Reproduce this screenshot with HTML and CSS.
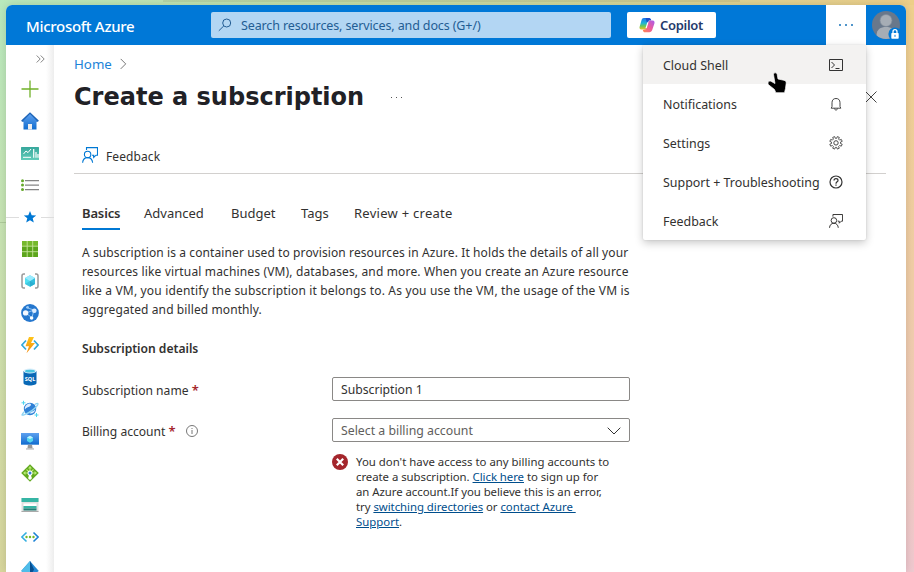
FILE: index.html
```html
<!DOCTYPE html>
<html lang="en">
<head>
<meta charset="utf-8">
<title>Create a subscription - Microsoft Azure</title>
<link rel="stylesheet" href="styles.css">
</head>
<body>
<svg class="defs" aria-hidden="true">
  <defs>
    <linearGradient id="blue" x1="0" y1="0" x2="0" y2="1"><stop offset="0" stop-color="#5ea0ef"/><stop offset="1" stop-color="#0f6ccf"/></linearGradient>
    <linearGradient id="teal" x1="0" y1="0" x2="0" y2="1"><stop offset="0" stop-color="#37a79c"/><stop offset="1" stop-color="#62ccb9"/></linearGradient>
    <linearGradient id="bolt" x1="0" y1="0" x2="0" y2="1"><stop offset="0" stop-color="#fec51b"/><stop offset="1" stop-color="#f58b0b"/></linearGradient>
    <linearGradient id="cp1" x1="0" y1="0" x2="0" y2="1"><stop offset="0" stop-color="#1976ee"/><stop offset=".45" stop-color="#20b4d5"/><stop offset=".7" stop-color="#6bc956"/><stop offset="1" stop-color="#f5bf25"/></linearGradient>
    <linearGradient id="cp2" x1="1" y1="0" x2="0" y2="1"><stop offset="0" stop-color="#a65cf0"/><stop offset=".5" stop-color="#ed5b9a"/><stop offset="1" stop-color="#ff8a4f"/></linearGradient>
    <symbol id="feedback" viewBox="0 0 16 16"><g fill="none" stroke="currentColor" stroke-width="1.1"><circle cx="5.600" cy="7.400" r="3.200"/><path d="M.6 15.800c.2-3.200 2-5.200 5-5.200s4.800 2 5 5.200M4.500 3V.6h11v7.600H14L11.700 10.500V8.200H10"/></g></symbol>
  </defs>
</svg>
<div class="window">
  <header class="topbar">
    <div class="brand">Microsoft Azure</div>
    <div class="search">
      <svg width="14" height="14" viewBox="0 0 14 14"><g fill="none" stroke="#235d94"><circle cx="8.700" cy="5" r="4"/><path d="M5.800 7.900.8 12.800"/></g></svg>
      <span>Search resources, services, and docs (G+/)</span>
    </div>
    <div class="copilot">
      <svg width="16" height="16" viewBox="0 0 16 16"><path d="M4.800 1h6L7.500 10.500C7 12.200 5.800 12.600 4.500 12.600H2.400C.5 12.600.2 11 .7 9.500L2.500 3.200C3 1.700 3.600 1 4.800 1Z" fill="url(#cp1)"/><path d="M6.500 1H10c1.500 0 2 1 2.300 2.500H9.500L8 6Z" fill="#1c4ecb"/><path d="M10.300 15.200H6c-1.300 0-1.800-.8-2.200-2.300L7 12l2-6.500C9.500 4 10.300 3.400 11.700 3.400h2c1.700 0 2.100 1.600 1.700 3.100L13.300 12.800c-.5 1.500-1.500 2.400-3 2.400Z" fill="url(#cp2)"/><path d="M8.300 5.200h1.200L7.800 11H6.500Z" fill="#fff"/></svg>
      <span>Copilot</span>
    </div>
    <div class="more"><i></i><i></i><i></i></div>
    <svg class="avatar" width="30" height="30" viewBox="0 0 30 30"><circle cx="14" cy="14" r="14" fill="#69788b"/><circle cx="14" cy="9.500" r="6" fill="#a6adb5"/><path d="M4.500 24.200C5 18 8.500 16 14 16s9 2 9.500 8.200A14 14 0 0 1 4.500 24.200Z" fill="#a6adb5"/><circle cx="14" cy="9.500" r="6" fill="none" stroke="#7d8998" stroke-width=".7"/><circle cx="23" cy="23" r="6.600" fill="#0078d7"/><rect x="19.300" y="22" width="7.400" height="5.800" rx=".7" fill="#fff"/><path d="M21 22v-1.300a2 2 0 0 1 4 0V22" fill="none" stroke="#fff" stroke-width="1.300"/><path d="M23 23.800v2" stroke="#0078d7"/></svg>
  </header>
  <div class="body">
    <nav class="rail">
      <svg class="expand" width="9" height="8" viewBox="0 0 9 8"><path d="m.7.500 3.500 3.500L.7 7.500M4.700.500 8.200 4 4.700 7.500" fill="none" stroke="#777" stroke-width=".9"/></svg>
      <div class="item"><svg viewBox="0 0 18 18"><path d="M9 .5v17M.5 9h17" stroke="#70b128" stroke-width="1.300"/></svg></div>
      <div class="item"><svg viewBox="0 0 18 18"><path d="M9 .3 17.800 8.500l-.8 1.200H1L.2 8.500Z" fill="#1d64b7"/><path d="m9 2 6.500 6.500V17.500H2.500V8.500Z" fill="url(#blue)"/><path d="M7 12h4v5.500H7z" fill="#eee"/></svg></div>
      <div class="item"><svg viewBox="0 0 18 18"><rect y="3" width="18" height="13" rx=".5" fill="url(#teal)"/><path d="m2.500 10 2.500-3 2 1.600 3-3.600M2 13.300h8" stroke="#fff" fill="none"/><path d="M12.700 5v8.700M15 8v5.700M17 10v3.700" stroke="#fff" stroke-width="1.200"/></svg></div>
      <div class="item"><svg viewBox="0 0 18 18"><g fill="#65a82b"><circle cx="1.500" cy="4.700" r="1.500"/><circle cx="1.500" cy="9.100" r="1.500"/><circle cx="1.500" cy="13.600" r="1.500"/></g><path d="M4 4.700h14M4 9.100h14M4 13.600h14" stroke="#858585" stroke-width="1.300"/></svg></div>
      <div class="item divider"><svg viewBox="0 0 18 18"><path d="m9 3 1.700 4.200 4.500.3-3.500 2.800 1.100 4.300L9 12.200l-3.800 2.400 1.100-4.300-3.500-2.800 4.500-.3Z" fill="#0078d4"/></svg></div>
      <div class="item"><svg viewBox="0 0 18 18"><path d="M1 1h16v16H1z" fill="#5ca51c"/><path d="M1 1h16v5H1z" fill="#76b92d"/><path d="M6.200 1v16M11.700 1v16M1 6.200h16M1 11.700h16" stroke="#c5e39a" stroke-width=".9"/></svg></div>
      <div class="item"><svg viewBox="0 0 18 18"><path d="M4 2H2.700Q1 2 1 4v10q0 2 1.700 2H4M14 2h1.300Q17 2 17 4v10q0 2-1.700 2H14" stroke="#999" stroke-width="1.500" fill="none"/><path d="m9 3.200 5 2.900v5.800l-5 2.900-5-2.900V6.100Z" fill="#50e0f2"/><path d="m14 6.100-5 2.900v5.800l5-2.900Z" fill="#32bedd"/><path d="m4 11.900 5-2.900 5 2.900-5 2.900Z" fill="#198ab3" opacity=".3"/><path d="m4 6.100 5-2.900 5 2.900-5 2.900Z" fill="#9cebff"/></svg></div>
      <div class="item"><svg viewBox="0 0 18 18"><circle cx="9" cy="9" r="8.900" fill="#2577ce"/><path d="m5 3.500 8 2.500-2 7.500M5 9l8-3M5 9l5.500 4.500" stroke="#8fc3f4" fill="none"/><circle cx="4.600" cy="8.900" r="2.700" fill="#f4f8ff"/><circle cx="13.300" cy="6.700" r="2.300" fill="#dcecff"/><circle cx="10.600" cy="14" r="1.800" fill="#fff"/><circle cx="6.600" cy="3.300" r="1.300" fill="#9dccf7"/></svg></div>
      <div class="item"><svg viewBox="0 0 18 18"><path d="M5 4.500.9 9 5 13.500" stroke="#32a8dc" stroke-width="1.700" fill="none"/><path d="M13 4.500 17.100 9 13 13.500" stroke="#32a8dc" stroke-width="1.700" fill="none"/><path d="M8 1h5L10 7h4L5.500 17.200 8 10.300H4.500Z" fill="url(#bolt)"/></svg></div>
      <div class="item"><svg viewBox="0 0 18 18"><path d="M2.500 3v12c0 1.500 3 2.500 6.500 2.500s6.500-1 6.500-2.500V3Z" fill="#0868b6"/><ellipse cx="9" cy="3" rx="6.500" ry="2.400" fill="#d9eefa"/><ellipse cx="9" cy="3.200" rx="5" ry="1.400" fill="#48c5e2"/><text class="sql" x="9" y="12.500">SQL</text></svg></div>
      <div class="item"><svg viewBox="0 0 18 18"><circle cx="9" cy="9" r="6.200" fill="#2f80d6"/><path d="M6 4.500c3-2 5-.5 3.500 1.300S5.500 7 4 9.500c-.8-1.500.5-4 2-5M14.500 9.500c-1 3-3.500 4.800-6 3.800 1-1.600 3.600-2 6-3.800" fill="#dcecff"/><path d="M3.500 11.500C.3 14.800 0 16 3.500 14.700 7.500 13 12.800 9.500 15.500 6.500 18 3.500 17.300 2.600 14 4.300" fill="none" stroke="#8fd4f3" stroke-width="1.300"/><path d="M2.500.8v4M.5 2.800h4M15.500 13v4M13.500 15h4" stroke="#50d5ef"/></svg></div>
      <div class="item"><svg viewBox="0 0 18 18"><path d="M0 1h18v11.700H0z" fill="url(#blue)"/><path d="M7 12.700h4l.7 4H6.300z" fill="#999"/><path d="M5 16.200h8v1.500H5z" fill="#c4c4c4"/><path d="m9 3.700 3 1.700v3.500l-3 1.800-3-1.800V5.400Z" fill="#52d6ef"/><path d="m6 5.400 3-1.700 3 1.700-3 1.700Z" fill="#c0f2ff"/></svg></div>
      <div class="item"><svg viewBox="0 0 18 18"><path d="m9 .2 8.800 8.800L9 17.800.2 9Z" fill="#62a91f"/><path d="M9 3v11M3 9h12M5.500 5.500 9 9l3.500-3.500" stroke="#b9ea73" stroke-width="1.100" fill="none"/><path d="m9 2-2 2.500h4ZM2 9l2.500-2v4ZM16 9l-2.500-2v4Z" fill="#b9ea73"/><path d="M9 10v4" stroke="#fff" stroke-width="2.500"/><circle cx="9" cy="9" r="2.500" fill="#fff"/><circle cx="9" cy="9" r="1.500" fill="#347fd0"/><circle cx="9" cy="14" r="1.800" fill="#fff"/></svg></div>
      <div class="item"><svg viewBox="0 0 18 18"><path d="M.5 2h17v14H.5z" fill="#e0e0e0"/><path d="M.5 2h17v4H.5z" fill="#36b5a5"/><path d="M2.500 7.500h13V10h-13z" fill="#fff"/><path d="M2.500 10h13v2.500h-13z" fill="#37b4a4"/><path d="M2.500 12.500h13v2h-13z" fill="#247e76"/><path d="M.5 15.500h17" stroke="#aaa"/></svg></div>
      <div class="item"><svg viewBox="0 0 18 18"><path d="M5.500 4.500.9 9l4.600 4.500" stroke="#32aee0" stroke-width="1.600" fill="none"/><path d="M12.500 4.500 17.100 9l-4.600 4.500" stroke="#1c82d5" stroke-width="1.600" fill="none"/><g fill="#75b82a"><circle cx="5.500" cy="9" r="1.200"/><circle cx="9" cy="9" r="1.200"/><circle cx="12.500" cy="9" r="1.200"/></g></svg></div>
      <div class="item"><svg viewBox="0 0 18 18"><path d="m9 1 8.800 10L9 17 .2 11Z" fill="#2387d3"/><path d="M9 1v16L.2 11Z" fill="#50bde9"/><path d="m9 1 4 8.500L9 17Z" fill="#064f91"/></svg></div>
    </nav>
    <main class="content">
      <div class="crumbs"><a>Home</a><svg width="7" height="12" viewBox="0 0 7 12"><path d="m.7.900 5 5-5 5" fill="none" stroke="#777"/></svg></div>
      <div class="title"><h1>Create a subscription</h1><span class="dots"><i></i><i></i><i></i></span><svg class="close" width="12" height="12" viewBox="0 0 12 12"><path d="m.5.500 11 11m0-11-11 11" stroke="#444"/></svg></div>
      <div class="command"><svg width="16" height="16"><use href="#feedback"/></svg><span>Feedback</span></div>
      <div class="form">
        <div class="tabs"><span class="active">Basics</span><span class="t2">Advanced</span><span class="t3">Budget</span><span class="t4">Tags</span><span class="t5">Review + create</span></div>
        <p class="intro"><span class="l1">A subscription is a container used to provision resources in Azure. It holds the details of all your</span><br><span class="l2">resources like virtual machines (VM), databases, and more. When you create an Azure resource</span><br><span class="l3">like a VM, you identify the subscription it belongs to. As you use the VM, the usage of the VM is</span><br><span class="l1">aggregated and billed monthly.</span></p>
        <h2>Subscription details</h2>
        <div class="row"><label>Subscription name <b>*</b></label><div class="field">Subscription 1</div></div>
        <div class="row second"><label>Billing account <b>*</b><svg width="12" height="12" viewBox="0 0 12 12"><circle cx="6" cy="6" r="5.500" fill="none" stroke="#777"/><path d="M6 5v4M6 3v1" stroke="#777"/></svg></label><div class="field select"><span>Select a billing account</span><svg width="14" height="8" viewBox="0 0 14 8"><path d="m.7.700 6.300 6.300L13.300.700" fill="none" stroke="#333"/></svg></div></div>
        <div class="error"><svg width="16" height="16" viewBox="0 0 16 16"><circle cx="8" cy="8" r="8" fill="#a4262c"/><path d="m4.800 4.800 6.400 6.400m0-6.400-6.400 6.400" stroke="#fff" stroke-width="2.200"/></svg><div>You don't have access to any billing accounts to<br><span class="tight">create a subscription. <a>Click here</a> to sign up for</span><br><span class="tight">an Azure account.If you believe this is an error,</span><br><span class="tight">try <a>switching directories</a> or <a>contact Azure&nbsp;</a></span><br><a>Support</a>.</div></div>
      </div>
    </main>
  </div>
</div>
<div class="menu">
  <div class="hover"><span>Cloud Shell</span><svg width="14" height="14" viewBox="0 0 14 14"><path d="M.5 1.500h13v11H.5ZM2.500 4l3 3-3 3M6.500 10.500h4" fill="none" stroke="#333"/></svg></div>
  <div><span>Notifications</span><svg width="14" height="14" viewBox="0 0 14 14"><path d="M2.200 11.200h9.600L11 9.500V5.700C11 3 9.500 1.500 7 1.500S3 3 3 5.700v3.800ZM5.500 11.500c0 2 3 2 3 0" fill="none" stroke="#444"/></svg></div>
  <div><span>Settings</span><svg width="14" height="14" viewBox="0 0 14 14"><path d="m5.700.6.600 1.700h1.400L8.300.6l2 .8-.7 1.700 1 1 1.700-.7.900 2-1.700.7v1.400l1.700.7-.9 2-1.700-.7-1 1 .7 1.700-2 .9-.6-1.700H6.300l-.6 1.700-2-.9.700-1.700-1-1-1.700.7-.9-2 1.700-.7V6.100L.8 5.400l.9-2 1.700.7 1-1-.7-1.700Z" fill="none" stroke="#444" stroke-width=".9"/><circle cx="7" cy="6.900" r="2.200" fill="none" stroke="#444"/></svg></div>
  <div><span>Support + Troubleshooting</span><svg width="14" height="14" viewBox="0 0 14 14"><circle cx="7" cy="7" r="6" fill="none" stroke="#333" stroke-width="1.200"/><path d="M5 5.600C5 3 9 3.100 9 5.500 9 6.900 7 6.800 7 8.700M7 9.600v1.200" fill="none" stroke="#333" stroke-width="1.200"/></svg></div>
  <div><span>Feedback</span><svg width="14" height="14"><use href="#feedback"/></svg></div>
</div>
<svg class="cursor" width="20" height="23" viewBox="0 0 20 23"><path d="M6.500 3.500C6.500 1.300 9.800 1.300 10.200 3.500L11 8l6 1.300c1.700.4 2.300 1.300 2.200 2.800l-.7 5.300-1 4.300H8.800L7.500 18.500 1.500 13.700C.2 12 1.700 9.200 4 10.300L8 12.500Z" fill="#000" stroke="#fff" stroke-width=".7"/></svg>
</body>
</html>
```

FILE: styles.css
```css
* { box-sizing: border-box; }
body {
  margin: 0;
  height: 572px;
  overflow: hidden;
  padding: 5px 8px 0 6px;
  font: 13px/19px "Noto Sans", sans-serif;
  color: #323130;
  background:
    linear-gradient(rgba(90, 90, 60, .12), rgba(90, 90, 60, .12)) 163px 0 / 577px 2px no-repeat,
    linear-gradient(rgba(60, 90, 40, .18), rgba(60, 90, 40, .18)) 0 222px / 6px 1px no-repeat,
    linear-gradient(90deg, #b9e9bc 0, #c9dda5 48%, #edce88 100%) top / 100% 5px no-repeat,
    linear-gradient(180deg, #b8e9bd, #cbe2b0 50%, #d8d69c) left / 50% 100% no-repeat,
    linear-gradient(180deg, #efd08d, #f0cda7 50%, #efc8cf) right / 50% 100% no-repeat;
}
.defs { position: absolute; width: 0; height: 0; }
.window {
  height: 567px;
  overflow: hidden;
  background: #fff;
  border-radius: 6px 6px 0 0;
  box-shadow: 0 0 8px rgba(0, 0, 0, .14);
}
.topbar { height: 40px; display: flex; align-items: center; background: #0078d7; }
.brand { width: 205px; padding: 3px 0 0 20px; color: #fff; font-size: 15px; font-weight: 500; letter-spacing: -.3px; white-space: nowrap; }
.search {
  width: 400px;
  height: 26px;
  padding-left: 7px;
  display: flex;
  align-items: center;
  gap: 9px;
  border-radius: 2px;
  background: #b3d6f3;
  color: #235d94;
  font-size: 12.5px;
  letter-spacing: -.12px;
  white-space: nowrap;
}
.copilot {
  width: 89px;
  height: 26px;
  margin-left: 16px;
  padding-left: 12px;
  display: flex;
  align-items: center;
  gap: 5px;
  border-radius: 2px;
  background: #fff;
  color: #243a6b;
  font-weight: 600;
  letter-spacing: -.3px;
}
.more { width: 40px; height: 40px; margin-left: 110px; display: flex; align-items: center; justify-content: center; gap: 4px; background: #fff; }
.more i { width: 2px; height: 2px; border-radius: 1px; background: #1672b8; }
.avatar { margin: 2px 0 0 6px; }
.body { display: flex; height: 527px; }
.rail {
  width: 48px;
  flex: none;
  padding-top: 10px;
  background: linear-gradient(90deg, #fff 40px, #ededed 48px);
}
.expand { display: block; margin: 0 0 10px 30px; }
.item { height: 32px; display: flex; align-items: center; justify-content: center; }
.item svg { display: block; width: 18px; height: 18px; }
.divider::before { content: ""; width: 13px; height: 1px; margin-right: auto; background: #ddd; }
.divider::after { content: ""; width: 13px; height: 1px; margin-left: auto; background: #ddd; }
.sql { font: bold 5.5px "Noto Sans", sans-serif; fill: #fff; text-anchor: middle; }
.content { flex: 1; padding: 9px 20px 0; }
.crumbs { height: 20px; display: flex; align-items: center; gap: 9px; color: #1b83d8; font-size: 13.3px; }
.crumbs a { width: 37px; margin-top: 1px; }
.title { height: 46px; display: flex; align-items: center; }
h1 { margin: 0; font: bold 24px/30px "DejaVu Sans", sans-serif; color: #212126; white-space: nowrap; }
.dots { margin-left: 27px; display: flex; gap: 4px; }
.dots i { width: 1px; height: 1px; background: #555; }
.close { margin: 0 9px 0 auto; }
.command { height: 54px; padding: 20px 8px 0; display: flex; align-items: center; gap: 8px; border-bottom: 1px solid #d2d0ce; font-size: 12px; letter-spacing: .1px; }
.command svg { color: #0078d4; margin-top: -4px; }
.form { padding-left: 8px; width: 556px; }
.tabs { height: 56px; padding-top: 30px; display: flex; white-space: nowrap; }
.tabs .active { width: 38px; height: 26px; margin-right: 24px; border-bottom: 2px solid #0078d4; font-weight: 600; letter-spacing: -.15px; }
.t2 { width: 87px; }
.t3 { width: 70px; }
.t4 { width: 53px; }
.t5 { letter-spacing: .27px; }
.intro { margin: 13px 0 0; font-size: 12px; line-height: 19px; white-space: nowrap; }
.l1 { letter-spacing: .1px; }
.l2 { letter-spacing: .15px; }
.l3 { letter-spacing: .165px; }
h2 { margin: 20px 0 0; font-size: 12.1px; line-height: 19px; font-weight: 600; }
.row { margin-top: 19px; height: 24px; display: flex; align-items: center; }
.row.second { margin-top: 17px; }
label { width: 250px; padding-top: 2px; display: flex; align-items: center; white-space: pre; font-size: 12.1px; }
label b { color: #a4262c; font-size: 13px; font-weight: 600; }
label svg { margin-left: 10px; }
.field { width: 298px; height: 24px; padding: 1px 8px 0; border: 1px solid #8a8886; border-radius: 2px; font-size: 12.2px; line-height: 22px; }
.select { display: flex; align-items: center; justify-content: space-between; color: #605e5c; font-size: 12.3px; }
.select span { padding-top: 1px; }
.error { margin: 12px 0 0 250px; display: flex; gap: 8px; font-size: 11.4px; line-height: 15px; white-space: nowrap; }
.error svg { flex: none; }
.error a { color: #004e8c; text-decoration: underline; }
.tight { letter-spacing: -.05px; }
.menu {
  position: absolute;
  left: 643px;
  top: 45px;
  width: 223px;
  height: 195px;
  background: #fff;
  border-radius: 0 0 2px 2px;
  box-shadow: 0 3px 8px rgba(0, 0, 0, .22), 0 0 2px rgba(0, 0, 0, .12);
  font-size: 12.45px;
}
.menu > div { height: 39px; padding: 2px 22px 0 20px; display: flex; align-items: center; justify-content: space-between; white-space: nowrap; }
.menu svg { margin: -1px 1px 0 0; }
.menu .hover { background: #f3f2f1; }
.cursor { position: absolute; left: 767px; top: 71px; }
```
